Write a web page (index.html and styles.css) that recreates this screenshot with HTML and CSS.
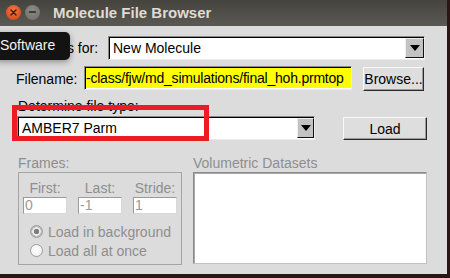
FILE: index.html
```html
<!DOCTYPE html>
<html lang="en">
<head>
    <meta charset="UTF-8">
    <title>Molecule File Browser</title>

    <link rel="stylesheet" href="styles.css">

</head>
<body>

    <div class="window">
        <div class="titlebar">
            <span class="wbtn close">
                <svg width="7" height="7" viewBox="0 0 7 7"><path d="M1 1L6 6M6 1L1 6" stroke="#3b1a0c" stroke-width="1.4" stroke-linecap="round"/></svg>
            </span>
            <span class="wbtn minimize"></span>
            <span class="title">Molecule File Browser</span>
        </div>

        <div class="row row-load">
            <span class="label label-load">Load files for:</span>
            <div class="combo combo-mol">
                <span class="combo-text">New Molecule</span>
                <span class="combo-arrow"></span>
            </div>
        </div>

        <div class="row row-file">
            <span class="label label-file">Filename:</span>
            <div class="entry entry-file"><span class="sel">-class/fjw/md_simulations/final_hoh.prmtop</span></div>
            <button class="btn btn-browse">Browse...</button>
        </div>

        <div class="type-label">Determine file type:</div>
        <div class="row row-type">
            <div class="combo combo-type">
                <span class="combo-text">AMBER7 Parm</span>
                <span class="combo-arrow"></span>
            </div>
            <button class="btn btn-load">Load</button>
        </div>

        <div class="lower">
            <div class="frames-col">
                <div class="dim">Frames:</div>
                <div class="group">
                    <div class="fields">
                        <div class="field"><span>First:</span><div class="small-entry">0</div></div>
                        <div class="field"><span>Last:</span><div class="small-entry">-1</div></div>
                        <div class="field"><span>Stride:</span><div class="small-entry">1</div></div>
                    </div>
                    <div class="radio on"><span class="dot"></span>Load in background</div>
                    <div class="radio"><span class="dot"></span>Load all at once</div>
                </div>
            </div>
            <div class="vol-col">
                <div class="dim">Volumetric Datasets</div>
                <div class="listbox"></div>
            </div>
        </div>

        <div class="annot"></div>
        <div class="tooltip">Software</div>
    </div>

</body>
</html>
```

FILE: styles.css
```css
body {
    margin: 0;
    background-color: #2b1515;
    font-family: 'Liberation Sans', Arial, sans-serif;
    font-size: 14px;
    color: black;
}
.window {
    position: relative;
    width: 447px;
    height: 274px;
    background-color: #dcdcdc;
    overflow: hidden;
}
.titlebar {
    height: 26px;
    display: flex;
    align-items: center;
    padding-left: 6px;
    background: linear-gradient(to bottom, #45433e 0%, #5b5953 100%);
}
.wbtn {
    width: 15px;
    height: 15px;
    border-radius: 50%;
    display: flex;
    align-items: center;
    justify-content: center;
    margin-top: -2px;
}
.close {
    background: radial-gradient(circle at 50% 35%, #f47546 0%, #df4f1e 70%, #c6421a 100%);
}
.minimize {
    margin-left: 4px;
    background: radial-gradient(circle at 50% 35%, #8c8b86 0%, #74736e 80%);
}
.minimize::after {
    content: '';
    width: 7px;
    height: 2px;
    background-color: #3e3d39;
}
.title {
    margin-left: 13px;
    margin-top: -1px;
    color: #dfdbd2;
    font-weight: bold;
    font-size: 15px;
}

.row {
    display: flex;
    align-items: center;
}
.label {
    white-space: nowrap;
}
.row-load {
    margin-top: 10px;
    height: 24px;
    padding-right: 22px;
}
.label-load {
    margin-left: 14px;
}
.combo {
    box-sizing: border-box;
    height: 24px;
    display: flex;
    align-items: stretch;
    background-color: white;
    border: 1px solid;
    border-color: #8a8a8a #ececec #ececec #8a8a8a;
    box-shadow: inset 1px 1px 0 #000;
    padding: 1px 0 1px 1px;
}
.combo-mol {
    width: 317px;
    margin-left: auto;
}
.combo-text {
    flex: 1;
    line-height: 20px;
    padding-left: 3px;
    white-space: nowrap;
}
.combo-arrow {
    width: 19px;
    box-sizing: border-box;
    background-color: #c3c3c3;
    border: 1px solid;
    border-color: #ededed #111 #111 #ededed;
    display: flex;
    align-items: center;
    justify-content: center;
}
.combo-arrow::after {
    content: '';
    border-left: 5px solid transparent;
    border-right: 5px solid transparent;
    border-top: 6px solid #000;
}

.row-file {
    margin-top: 6px;
    height: 25px;
}
.label-file {
    margin-left: 16px;
    width: 68px;
}
.entry {
    box-sizing: border-box;
    background-color: white;
    border: 1px solid;
    border-color: #8a8a8a #ececec #ececec #8a8a8a;
    box-shadow: inset 1px 1px 0 #000;
    padding: 1px 0 1px 1px;
}
.entry-file {
    width: 268px;
    height: 24px;
    align-self: flex-start;
    overflow: hidden;
    display: flex;
}
.sel {
    flex: 1;
    background-color: #ffff00;
    line-height: 21px;
    letter-spacing: -0.22px;
    white-space: nowrap;
    overflow: hidden;
}
.btn {
    box-sizing: border-box;
    font-family: inherit;
    font-size: 14px;
    color: black;
    background-color: #dedede;
    border: 1px solid;
    border-color: #f8f8f8 #2a2a2a #2a2a2a #f8f8f8;
    box-shadow: inset -1px -1px 0 #9a9a9a;
    padding: 0;
    margin: 0;
}
.btn-browse {
    width: 61px;
    height: 24px;
    margin-left: 11px;
    align-self: flex-end;
}

.type-label {
    margin-top: 7px;
    margin-left: 18px;
    line-height: 16px;
    height: 16px;
}
.row-type {
    margin-top: 2px;
    height: 24px;
}
.combo-type {
    width: 298px;
    margin-left: 17px;
}
.combo-type .combo-arrow {
    width: 17px;
}
.btn-load {
    width: 84px;
    height: 23px;
    margin-left: 28px;
    align-self: flex-end;
}

.lower {
    display: flex;
    margin-top: 15px;
}
.dim {
    color: #8e8e8e;
    line-height: 16px;
    height: 17px;
    white-space: nowrap;
}
.frames-col {
    margin-left: 18px;
    width: 164px;
}
.group {
    box-sizing: border-box;
    height: 93px;
    border: 1px solid #a4a4a4;
    padding: 7px 4px 0 4px;
}
.fields {
    display: flex;
    justify-content: space-between;
}
.field {
    width: 44px;
    display: flex;
    flex-direction: column;
    align-items: center;
    color: #8e8e8e;
    line-height: 16px;
    white-space: nowrap;
}
.small-entry {
    box-sizing: border-box;
    align-self: stretch;
    height: 17px;
    margin-top: 1px;
    background-color: white;
    border: 1px solid;
    border-color: #9a9a9a #d8d8d8 #d8d8d8 #9a9a9a;
    color: #9a9a9a;
    line-height: 15px;
    padding-left: 1px;
}
.radio {
    display: flex;
    align-items: center;
    height: 19px;
    padding-left: 7px;
    color: #8e8e8e;
    white-space: nowrap;
}
.fields + .radio {
    margin-top: 8px;
}
.dot {
    box-sizing: border-box;
    width: 13px;
    height: 13px;
    border-radius: 50%;
    margin-right: 5px;
    border: 1px solid #9c9c9c;
    background: radial-gradient(circle at 45% 45%, #ffffff 0%, #ececec 100%);
}
.radio.on .dot {
    background: radial-gradient(circle, #7e7e7e 0 2.5px, #ececec 3px 4px, #bdbdbd 4.5px);
}
.vol-col {
    margin-left: 11px;
    width: 234px;
}
.listbox {
    box-sizing: border-box;
    height: 92px;
    background-color: white;
    border: 1px solid;
    border-color: #8a8a8a #c2c2c2 #c2c2c2 #8a8a8a;
    box-shadow: inset 1px 1px 0 #a8a8a8;
}

/* annotation and tooltip lie over the dialog */
.annot {
    position: absolute;
    left: 12px;
    top: 105px;
    width: 197px;
    height: 36px;
    box-sizing: border-box;
    border: 5px solid #ed1c24;
}
.tooltip {
    position: absolute;
    left: -6px;
    top: 32px;
    width: 76px;
    height: 28px;
    box-sizing: border-box;
    padding-left: 6px;
    border-radius: 5px;
    background-color: #131313;
    color: #f2f2f2;
    font-size: 14px;
    line-height: 27px;
    box-shadow: 0 2px 6px rgba(0,0,0,.35);
}
```
